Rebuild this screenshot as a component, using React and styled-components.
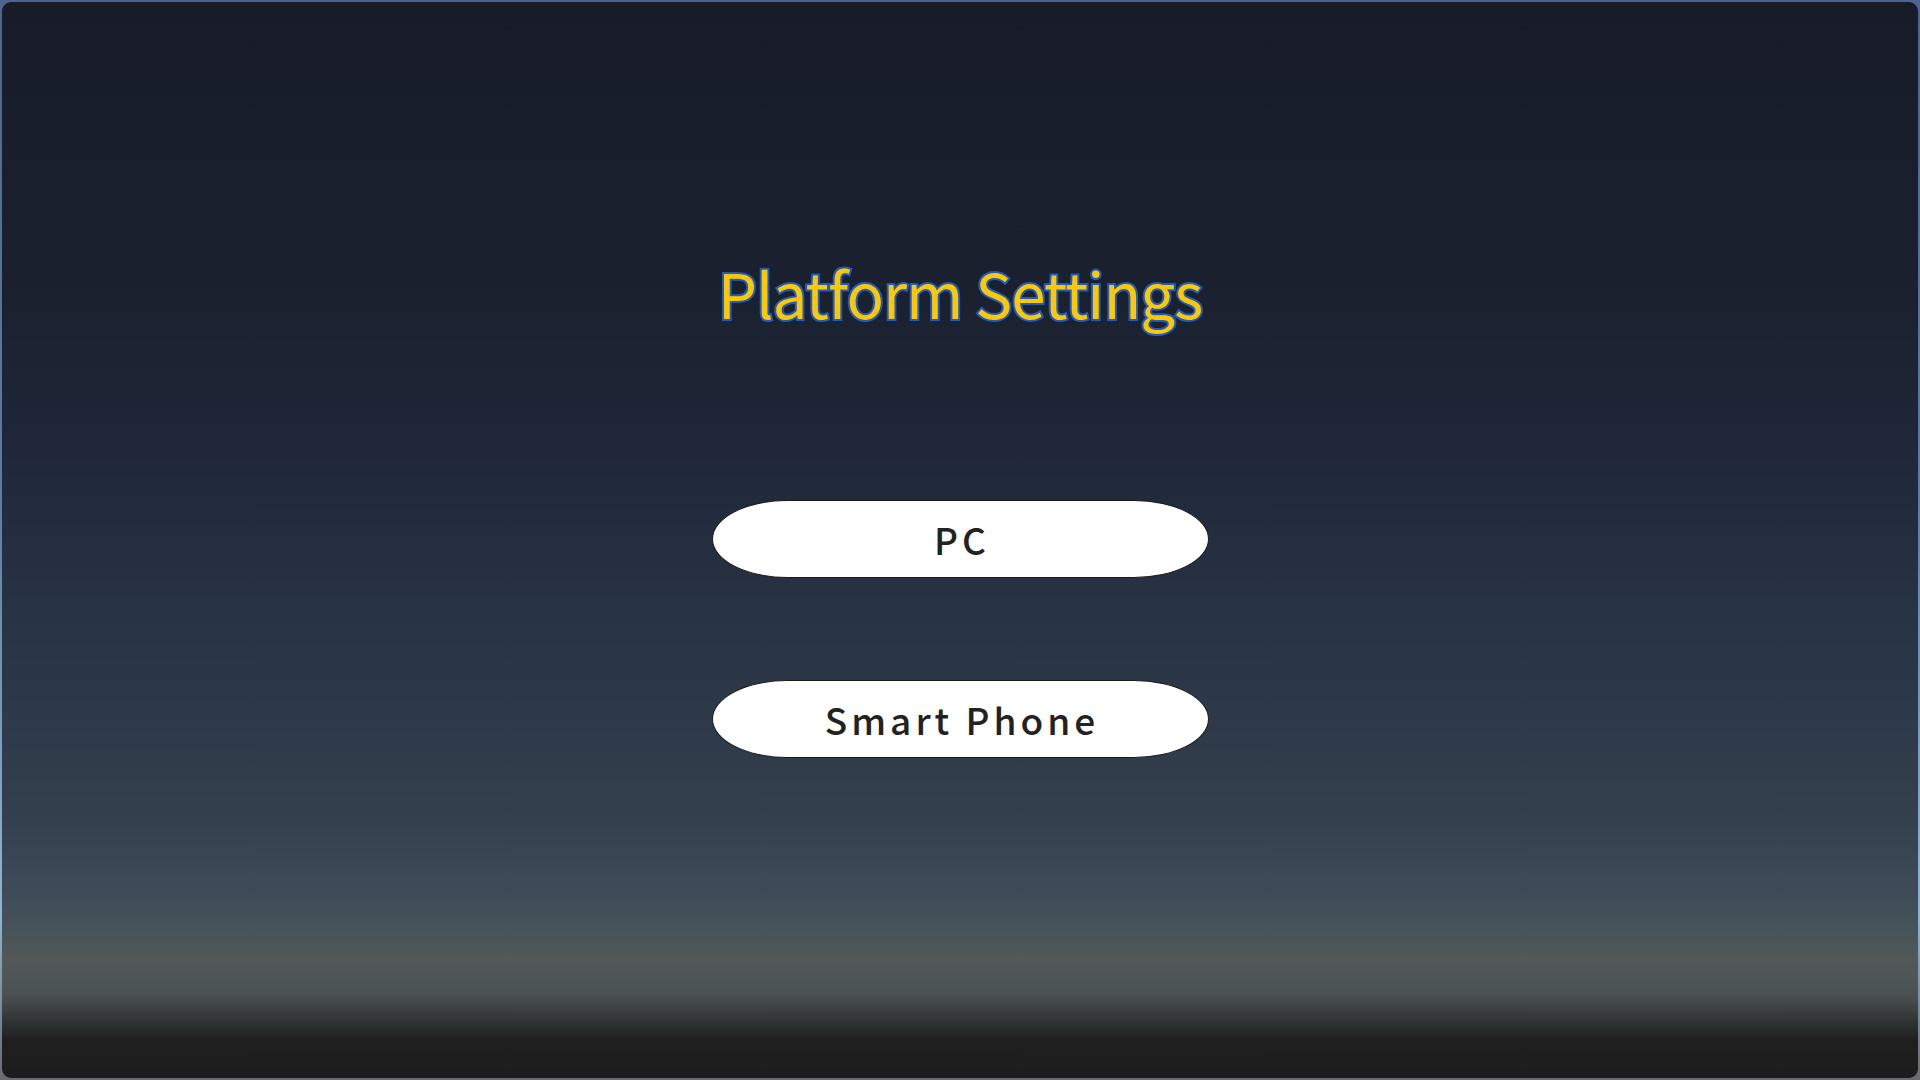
import React from 'react';
import styled, { createGlobalStyle } from 'styled-components';

const GlobalStyle = createGlobalStyle`
    html, body {
        margin: 0;
        padding: 0;
        width: 100%;
        height: 100%;
        overflow: hidden;
        background: #5b6f8e;
    }
    #root {
        height: 100%;
    }
`;

const Frame = styled.div`
    height: 100vh;
    box-sizing: border-box;
    padding: 2px;
    background: linear-gradient(180deg, #4c6590 0%, #5d7aa6 45%, #8fb3d8 85%, #6a6a6c 100%);
`;

const Screen = styled.main`
    height: 100%;
    box-sizing: border-box;
    border-radius: 9px;
    overflow: hidden;
    display: flex;
    flex-direction: column;
    align-items: center;
    padding-top: 254px;
    background: linear-gradient(
        180deg,
        #171c28 0%,
        #1a202d 25%,
        #1e2637 40%,
        #283343 57%,
        #34404e 76%,
        #3d4a57 82%,
        #465359 86%,
        #525857 89%,
        #4c5453 92%,
        #2e3131 95%,
        #201f20 96.5%,
        #1e1d1e 100%
    );
`;

const Title = styled.h1`
    margin: 0 0 172px;
    font-family: "Noto Sans CJK JP", "Noto Sans", sans-serif;
    font-weight: 400;
    font-size: 62px;
    line-height: 72px;
    letter-spacing: -1px;
    color: #ffc800;
    -webkit-text-stroke: 4px #1d5cc4;
    paint-order: stroke fill;
`;

const Menu = styled.div`
    display: flex;
    flex-direction: column;
    gap: 102px;
`;

const PlatformButton = styled.button`
    width: 497px;
    height: 78px;
    box-sizing: border-box;
    border: 1.5px solid #1b1b1b;
    border-radius: 75px / 50%;
    background: #ffffff;
    color: #222222;
    font-family: "Noto Sans CJK JP", "Noto Sans", sans-serif;
    font-weight: 500;
    font-size: 37px;
    letter-spacing: 4px;
    padding: 0 0 0 4px;
    cursor: pointer;
`;

const platforms = ['PC', 'Smart Phone'];

const App = () => {
    return (
        <Frame>
            <GlobalStyle />
            <Screen>
                <Title>Platform Settings</Title>
                <Menu>
                    {platforms.map((name) => (
                        <PlatformButton key={name}>{name}</PlatformButton>
                    ))}
                </Menu>
            </Screen>
        </Frame>
    );
};

export default App;
